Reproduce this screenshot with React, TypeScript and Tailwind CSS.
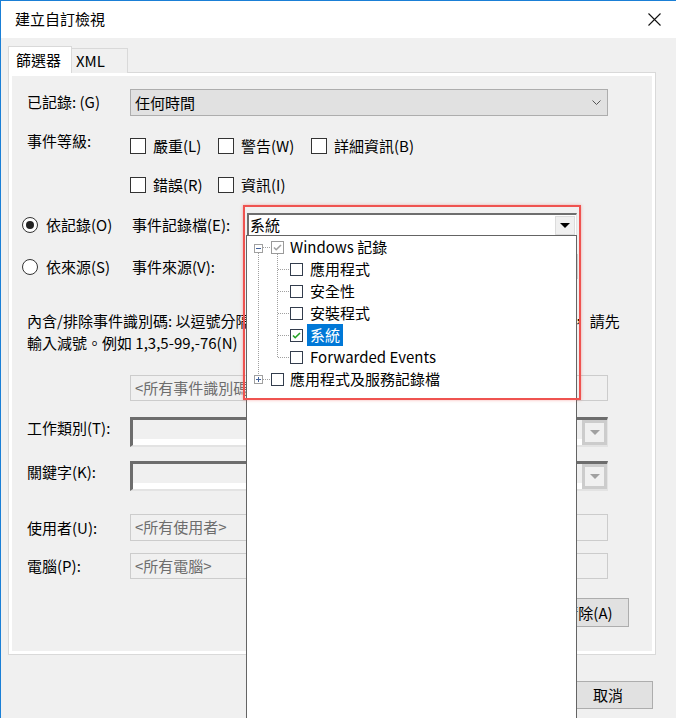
import React from 'react';

function Box16({ checked = false }: { checked?: boolean }) {
  return (
    <span className="flex h-[16px] w-[16px] shrink-0 items-center justify-center border border-[#333333] bg-white">
      {checked && (
        <svg width="10" height="8" viewBox="0 0 10 8">
          <path d="M1 4l3 3 5-6" fill="none" stroke="#333" strokeWidth="1.5" />
        </svg>
      )}
    </span>
  );
}

function Level({ label, w }: { label: string; w?: string }) {
  return (
    <div className={`flex h-[22px] items-center gap-[7px] ${w ?? ''}`}>
      <Box16 />
      <span className="leading-[22px]">{label}</span>
    </div>
  );
}

function Radio({ on = false }: { on?: boolean }) {
  return (
    <span className="flex h-[16px] w-[16px] shrink-0 items-center justify-center rounded-full border border-[#333333] bg-white">
      {on && <span className="h-[8px] w-[8px] rounded-full bg-[#222222]" />}
    </span>
  );
}

function TreeCheck({ state }: { state: 'off' | 'on' | 'gray' }) {
  const gray = state === 'gray';
  return (
    <span
      className={
        gray
          ? 'flex h-[13px] w-[13px] shrink-0 items-center justify-center border border-[#9a9a9a] bg-white'
          : 'flex h-[13px] w-[13px] shrink-0 items-center justify-center border border-[#333d4d] bg-white'
      }
    >
      {state !== 'off' && (
        <svg width="9" height="7" viewBox="0 0 9 7">
          <path
            d="M1 3.5l2.2 2.2L8 1"
            fill="none"
            stroke={gray ? '#a0a0a0' : '#21a121'}
            strokeWidth="1.6"
          />
        </svg>
      )}
    </span>
  );
}

function Expander({ open }: { open: boolean }) {
  return (
    <span className="flex h-[9px] w-[9px] shrink-0 items-center justify-center border border-[#a0a0a0] bg-white">
      <svg width="7" height="7" viewBox="0 0 7 7">
        <path d="M1 3.5h5" stroke="#40609a" strokeWidth="1" />
        {!open && <path d="M3.5 1v5" stroke="#40609a" strokeWidth="1" />}
      </svg>
    </span>
  );
}

function SunkenCombo() {
  return (
    <div className="flex h-[30px] w-[478px] border-b-2 border-l-[3px] border-r border-t-[3px] border-b-[#e3e3e3] border-l-[#6d6d6d] border-r-[#e3e3e3] border-t-[#6d6d6d]">
      <div className="flex flex-1 flex-col">
        <div className="flex-1 bg-[#f0f0f0]" />
        <div className="h-[6px] bg-white" />
      </div>
      <div className="flex w-[25px] items-center justify-center border-[3px] border-[#cccccc] bg-[#f0f0f0]">
        <svg width="10" height="5" viewBox="0 0 10 5">
          <path d="M0 0h10L5 5z" fill="#a0a0a0" />
        </svg>
      </div>
    </div>
  );
}

function Placeholder({ text, h }: { text: string; h: string }) {
  return (
    <div className={`flex w-[478px] items-center border border-[#cccccc] bg-[#f0f0f0] pl-[4px] text-[#6d6d6d] ${h}`}>
      {text}
    </div>
  );
}

const children = [
  { label: '應用程式', state: 'off' as const },
  { label: '安全性', state: 'off' as const },
  { label: '安裝程式', state: 'off' as const },
  { label: '系統', state: 'on' as const, selected: true },
  { label: 'Forwarded Events', state: 'off' as const },
];

function LogTree() {
  return (
    <div className="relative">
      {/* dotted connector lines */}
      <svg className="absolute left-0 top-0" width="120" height="160" shapeRendering="crispEdges">
        <g stroke="#a0a0a0" strokeWidth="1" strokeDasharray="1 1">
          <line x1="11.5" y1="17" x2="11.5" y2="139" />
          <line x1="16" y1="11.5" x2="24" y2="11.5" />
          <line x1="16" y1="143.5" x2="24" y2="143.5" />
          <line x1="30.5" y1="18" x2="30.5" y2="121" />
          {[0, 1, 2, 3, 4].map((i) => (
            <line key={i} x1="31" y1={33.5 + 22 * i} x2="43" y2={33.5 + 22 * i} />
          ))}
        </g>
      </svg>
      <div className="relative flex flex-col">
        <div className="flex h-[22px] items-center">
          <span className="ml-[7px] mt-[3px]">
            <Expander open />
          </span>
          <span className="ml-[8px]">
            <TreeCheck state="gray" />
          </span>
          <span className="ml-[6px] leading-[22px]">Windows 記錄</span>
        </div>
        {children.map((c) => (
          <div key={c.label} className="flex h-[22px] items-center pl-[43px]">
            <TreeCheck state={c.state} />
            <span
              className={
                c.selected
                  ? 'ml-[4px] h-[22px] bg-[#0078d7] px-[3px] leading-[22px] text-white'
                  : 'ml-[4px] h-[22px] px-[3px] leading-[22px]'
              }
            >
              {c.label}
            </span>
          </div>
        ))}
        <div className="flex h-[22px] items-center">
          <span className="ml-[7px] mt-[1px]">
            <Expander open={false} />
          </span>
          <span className="ml-[8px]">
            <TreeCheck state="off" />
          </span>
          <span className="ml-[6px] leading-[22px]">應用程式及服務記錄檔</span>
        </div>
      </div>
    </div>
  );
}

export default function App() {
  return (
    <div className="relative h-[718px] w-[676px] overflow-hidden border-l border-t border-[#1a7fd6] bg-[#f0f0f0] font-['Noto_Sans_CJK_TC','Noto_Sans',sans-serif] text-[15px] text-black">
      {/* title bar */}
      <div className="flex h-[37px] items-center justify-between bg-white pl-[14px] pr-[15px]">
        <span className="-mt-px leading-[22px]">建立自訂檢視</span>
        <svg width="13" height="13" viewBox="0 0 13 13">
          <path d="M0.5 0.5l12 12M12.5 0.5l-12 12" stroke="#111" strokeWidth="1.1" />
        </svg>
      </div>

      <div className="pl-[7px] pt-[8px]">
        {/* tabs */}
        <div className="relative z-10 -mb-px flex h-[27px] items-end">
          <div className="flex h-[27px] w-[64px] items-center border border-b-0 border-[#d9d9d9] bg-white pl-[7px] leading-[22px]">
            篩選器
          </div>
          <div className="flex h-[25px] w-[56px] items-center border border-b-0 border-l-0 border-[#d9d9d9] bg-[#f0f0f0] pl-[4px] leading-[22px]">
            XML
          </div>
        </div>

        {/* tab panel */}
        <div className="h-[583px] w-[648px] border border-[#d9d9d9] bg-white p-[3px]">
          <div className="flex h-full flex-col bg-[#f0f0f0]">
            {/* logged */}
            <div className="mt-[13px] flex h-[27px] items-center">
              <span className="-mt-[2px] w-[118px] pl-[15px] leading-[22px]">已記錄: (G)</span>
              <div className="flex h-[27px] w-[478px] items-center justify-between border border-[#adadad] bg-[#e1e1e1] pl-[4px] pr-[6px]">
                <span className="leading-[22px]">任何時間</span>
                <svg width="9" height="5" viewBox="0 0 9 5">
                  <path d="M0.5 0.5l4 4 4-4" fill="none" stroke="#555" strokeWidth="1" />
                </svg>
              </div>
            </div>

            {/* event level */}
            <div className="mt-[14px] flex">
              <span className="w-[118px] pl-[15px] leading-[22px]">事件等級:</span>
              <div className="flex flex-col gap-[17px] pt-[5px]">
                <div className="flex">
                  <Level label="嚴重(L)" w="w-[88px]" />
                  <Level label="警告(W)" w="w-[93px]" />
                  <Level label="詳細資訊(B)" />
                </div>
                <div className="flex">
                  <Level label="錯誤(R)" w="w-[88px]" />
                  <Level label="資訊(I)" />
                </div>
              </div>
            </div>

            {/* by log */}
            <div className="mt-[17px] flex h-[23px] items-center pl-[10px]">
              <div className="flex w-[110px] items-center gap-[8px]">
                <Radio on />
                <span className="leading-[22px]">依記錄(O)</span>
              </div>
              <span className="w-[115px] leading-[22px]">事件記錄檔(E):</span>
              <div className="relative flex h-[23px] w-[330px] items-center border-b border-l-2 border-r border-t-2 border-b-[#e3e3e3] border-l-[#6e6e6e] border-r-[#e3e3e3] border-t-[#6e6e6e] bg-white pl-[1px]">
                <span className="flex-1 leading-[20px]">系統</span>
                <div className="mr-[1px] flex h-[19px] w-[20px] items-center justify-center border border-[#dcdcdc] bg-[#f0f0f0]">
                  <svg width="10" height="5" viewBox="0 0 10 5">
                    <path d="M0 0h10L5 5z" fill="#000" />
                  </svg>
                </div>
              </div>
            </div>

            {/* by source */}
            <div className="mt-[19px] flex h-[23px] items-center pl-[10px]">
              <div className="flex w-[110px] items-center gap-[8px]">
                <Radio />
                <span className="leading-[22px]">依來源(S)</span>
              </div>
              <span className="w-[115px] leading-[22px]">事件來源(V):</span>
              <div className="h-[25px] w-[331px] border border-[#cccccc] bg-[#f0f0f0]" />
            </div>

            {/* description */}
            <p className="mt-[32px] whitespace-nowrap pl-[15px] leading-[22px]">
              內含/排除事件識別碼: 以逗號分隔的識別碼編號和/或識別碼的範圍。若要排除準則， 請先
              <br />
              輸入減號。例如 1,3,5-99,-76(N)
            </p>

            <div className="ml-[118px] mt-[21px]">
              <Placeholder text="<所有事件識別碼>" h="h-[26px]" />
            </div>

            {/* task category */}
            <div className="mt-[16px] flex items-start">
              <span className="w-[118px] pl-[15px] leading-[22px]">工作類別(T):</span>
              <SunkenCombo />
            </div>

            {/* keywords */}
            <div className="mt-[14px] flex items-start">
              <span className="w-[118px] pl-[15px] leading-[22px]">關鍵字(K):</span>
              <SunkenCombo />
            </div>

            {/* user */}
            <div className="mt-[23px] flex items-center">
              <span className="w-[118px] pl-[15px] leading-[22px]">使用者(U):</span>
              <Placeholder text="<所有使用者>" h="h-[27px]" />
            </div>

            {/* computer */}
            <div className="mt-[12px] flex items-center">
              <span className="w-[118px] pl-[15px] leading-[22px]">電腦(P):</span>
              <Placeholder text="<所有電腦>" h="h-[26px]" />
            </div>

            <div className="mr-[23px] mt-[19px] flex justify-end">
              <button className="flex h-[29px] w-[76px] items-center justify-center border border-[#adadad] bg-[#e1e1e1] pr-[6px] leading-[22px]">
                清除(A)
              </button>
            </div>
          </div>
        </div>

        {/* dialog buttons */}
        <div className="mt-[26px] flex w-[645px] justify-end gap-[6px]">
          <button className="flex h-[28px] w-[90px] items-center justify-center border border-[#adadad] bg-[#e1e1e1] leading-[22px]">
            確定
          </button>
          <button className="flex h-[28px] w-[90px] items-center justify-center border border-[#adadad] bg-[#e1e1e1] leading-[22px]">
            取消
          </button>
        </div>
      </div>

      {/* open dropdown list of the log combo */}
      <div className="absolute left-[245px] top-[234px] z-20 h-[500px] w-[331px] border border-[#646464] bg-white">
        <LogTree />
      </div>

      {/* highlight frame */}
      <div className="pointer-events-none absolute left-[242px] top-[204px] z-30 h-[195px] w-[338px] border-2 border-[#ef5350] shadow-[0_0_3px_rgba(239,83,80,0.45)]" />
    </div>
  );
}
